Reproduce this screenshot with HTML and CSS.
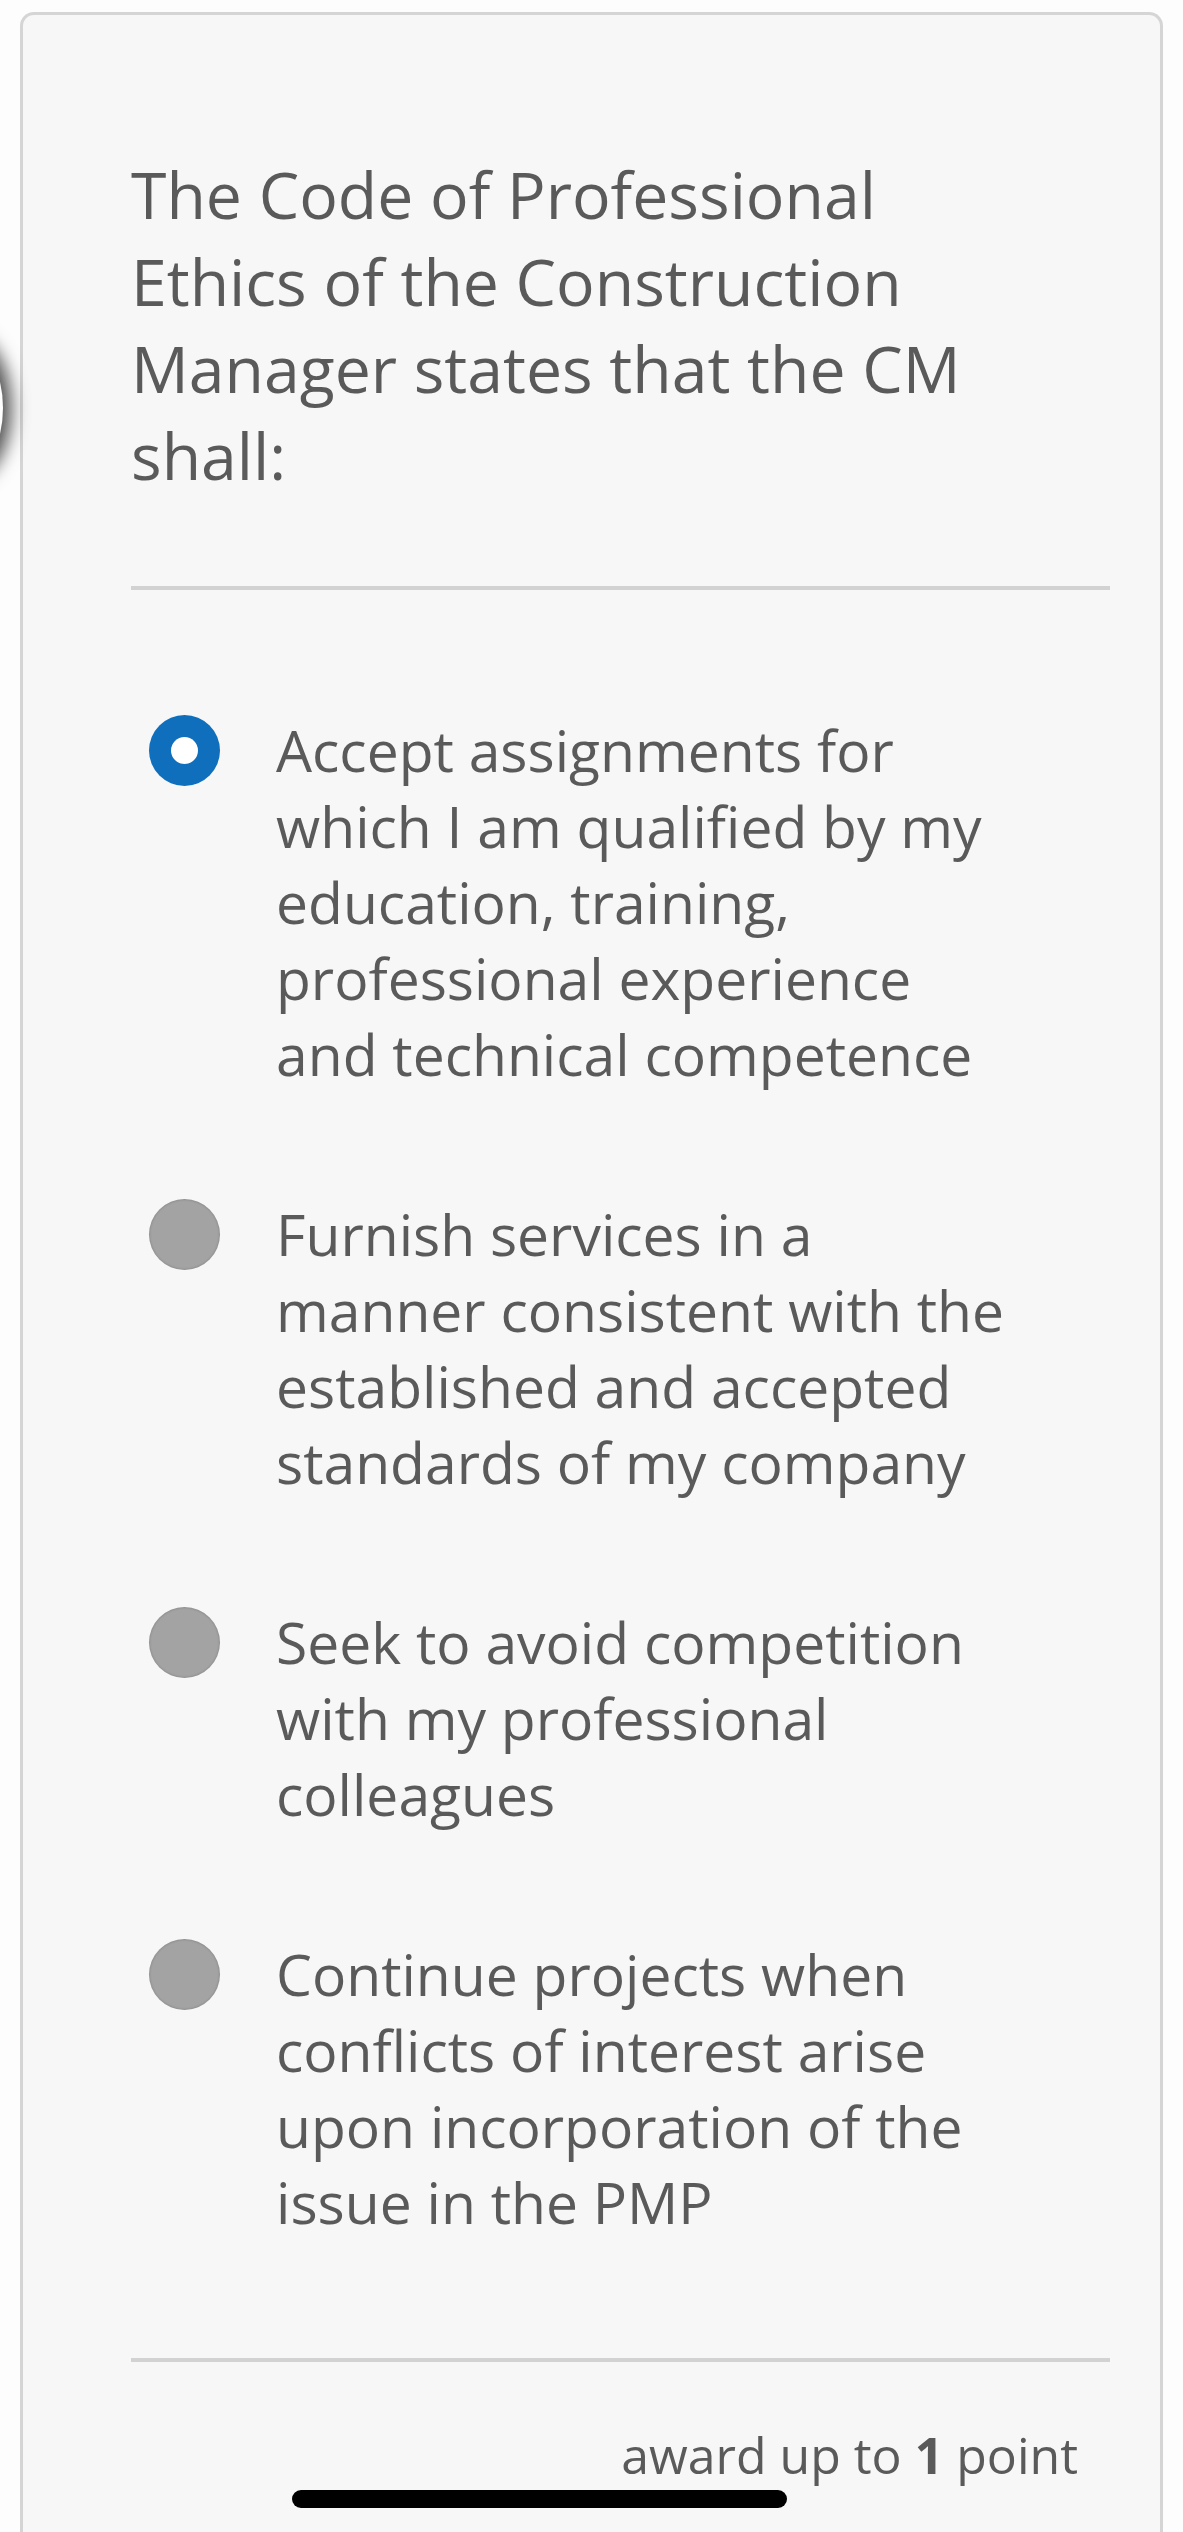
FILE: index.html
```html
<!DOCTYPE html>
<html lang="en">
<head>
<meta charset="utf-8">
<title>Question</title>
<link rel="stylesheet" href="styles.css">
</head>
<body>
<div class="edge-button"></div>
<main class="card">
  <p class="question">The Code of Professional Ethics of the Construction Manager states that the CM shall:</p>
  <hr class="divider">
  <ul class="options">
    <li class="option"><span class="radio selected"></span><span class="label">Accept assignments for which I am qualified by my education, training, professional experience and technical competence</span></li>
    <li class="option"><span class="radio"></span><span class="label">Furnish services in a manner consistent with the established and accepted standards of my company</span></li>
    <li class="option"><span class="radio"></span><span class="label">Seek to avoid competition with my professional colleagues</span></li>
    <li class="option"><span class="radio"></span><span class="label">Continue projects when conflicts of interest arise upon incorporation of the issue in the PMP</span></li>
  </ul>
  <hr class="divider divider-bottom">
  <div class="award">award up to <b>1</b> point</div>
</main>
<div class="home-indicator"></div>
</body>
</html>
```
FILE: styles.css
```css
html, body {
  margin: 0;
  padding: 0;
  background: #fdfdfd;
  height: 2532px;
  overflow: hidden;
}
body {
  font-family: "Open Sans", "Noto Sans", sans-serif;
  color: #5a5a5a;
}
.card {
  margin: 12px 20px 0 20px;
  border: 3px solid #d5d5d5;
  border-bottom: none;
  border-radius: 14px 14px 0 0;
  background: #f7f7f7;
  padding: 136px 50px 200px 108px;
  min-height: 2600px;
  box-sizing: border-box;
}
.question {
  margin: 0;
  font-size: 64.3px;
  line-height: 87px;
  max-width: 880px;
}
.divider {
  border: none;
  height: 4px;
  background: #d2d2d2;
  margin: 87px 0 0 0;
}
.options {
  list-style: none;
  margin: 122px 0 0 0;
  padding: 0;
  display: flex;
  flex-direction: column;
  gap: 104px;
}
.option {
  display: flex;
  align-items: flex-start;
  gap: 56px;
  padding-left: 18px;
}
.radio {
  flex: none;
  width: 71px;
  height: 71px;
  border-radius: 50%;
  margin-top: 3px;
  background: #a3a3a3;
  box-shadow: inset 0 0 2px 1px rgba(0,0,0,0.12);
  position: relative;
}
.radio.selected {
  background: #0f6fbd;
  box-shadow: none;
}
.radio.selected::after {
  content: "";
  position: absolute;
  left: 22px;
  top: 22px;
  width: 27px;
  height: 27px;
  border-radius: 50%;
  background: #fff;
}
.label {
  font-size: 57px;
  line-height: 76px;
  max-width: 738px;
}
.divider-bottom {
  margin-top: 118px;
}
.award {
  margin-top: 59px;
  text-align: right;
  padding-right: 32px;
  font-size: 50px;
  line-height: 68px;
}
.award b {
  font-weight: 700;
}
.edge-button {
  position: absolute;
  left: -75px;
  top: 340px;
  width: 78px;
  height: 136px;
  border-radius: 50%;
  background: #ffffff;
  box-shadow: 0 0 18px 8px rgba(0,0,0,0.7);
  z-index: 2;
}
.home-indicator {
  position: fixed;
  left: 292px;
  bottom: 24px;
  width: 495px;
  height: 18px;
  border-radius: 9px;
  background: #000;
}
```
